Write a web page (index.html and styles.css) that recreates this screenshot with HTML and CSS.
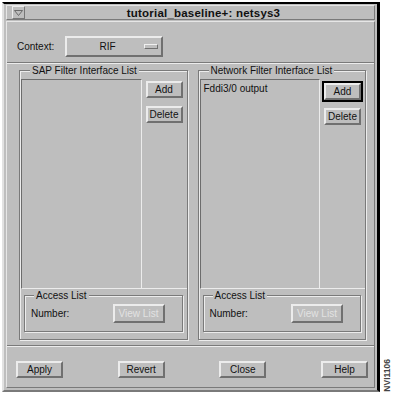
FILE: index.html
```html
<!DOCTYPE html>
<html lang="en">
<head>
  <meta charset="UTF-8" />
  <title>tutorial_baseline+: netsys3</title>
  <link rel="stylesheet" href="styles.css">
</head>
<body>

  <div class="screen">
    <div class="window">
      <!-- Title Bar -->
      <div class="titlebar">
        <span class="menu-btn">
          <svg width="9" height="6" viewBox="0 0 9 6"><path d="M0.5 0.5 H8.5 L4.5 5.5 Z" fill="none" stroke="#6a6a6a" stroke-width="1"/></svg>
        </span>
        <span class="title">tutorial_baseline+: netsys3</span>
      </div>

      <div class="content">
        <!-- Context -->
        <div class="context-row">
          <span class="label">Context:</span>
          <div class="option">
            <span class="option-text">RIF</span>
            <span class="indicator"></span>
          </div>
        </div>

        <div class="sep"></div>

        <!-- Filter Lists -->
        <div class="groups">
          <div class="group">
            <span class="group-title">SAP Filter Interface List</span>
            <div class="pane">
              <div class="list"></div>
              <div class="side">
                <button class="btn">Add</button>
                <button class="btn">Delete</button>
              </div>
            </div>
            <div class="access">
              <span class="group-title">Access List</span>
              <div class="access-row">
                <span>Number:</span>
                <button class="btn disabled">View List</button>
              </div>
            </div>
          </div>

          <div class="group">
            <span class="group-title">Network Filter Interface List</span>
            <div class="pane">
              <div class="list">
                <div class="list-item">Fddi3/0 output</div>
              </div>
              <div class="side">
                <div class="default"><button class="btn">Add</button></div>
                <button class="btn">Delete</button>
              </div>
            </div>
            <div class="access">
              <span class="group-title">Access List</span>
              <div class="access-row">
                <span>Number:</span>
                <button class="btn disabled">View List</button>
              </div>
            </div>
          </div>
        </div>

        <div class="sep"></div>

        <!-- Action Buttons -->
        <div class="actions">
          <button class="btn">Apply</button>
          <button class="btn">Revert</button>
          <button class="btn">Close</button>
          <button class="btn">Help</button>
        </div>
      </div>
    </div>

    <div class="caption">NVI1106</div>
  </div>

</body>
</html>
```

FILE: styles.css
```css
/* Reset & Base */
* { margin:0; padding:0; box-sizing:border-box; }
body {
  background:#fff;
  font-family:'Liberation Sans',Arial,sans-serif;
  font-size:10px;
  color:#111;
}

.screen {
  display:flex; align-items:flex-end;
  width:394px; height:395px;
}

/* Window Frame */
.window {
  display:flex; flex-direction:column;
  width:378px; height:390px;
  margin:2px 0 0 2px;
  background:#bebebe;
  border-top:2px solid #000;
  border-right:3px solid #000;
  border-left:2px solid #e2e2e2;
  border-bottom:2px solid #7a7a7a;
  padding:1px 2px 2px 2px;
  align-self:flex-start;
}

.titlebar {
  display:flex; align-items:center;
  height:17px;
  border:1px solid;
  border-color:#e6e6e6 #7a7a7a #7a7a7a #e6e6e6;
}
.menu-btn {
  display:flex; align-items:center; justify-content:center;
  width:13px; height:13px;
  margin-left:5px;
  border:1px solid;
  border-color:#ececec #777 #777 #ececec;
}
.title {
  flex:1;
  text-align:center;
  font-weight:bold;
  font-size:11.5px;
  letter-spacing:0.2px;
  padding-left:8px;
}

/* Content */
.content {
  flex:1;
  display:flex; flex-direction:column;
  border:1px solid;
  border-color:#e6e6e6 #7a7a7a #7a7a7a #e6e6e6;
  margin-top:1px;
}

.context-row {
  display:flex; align-items:center;
  margin:14px 0 0 10px;
  height:21px;
}
.label { width:48px; }
.option {
  display:flex; align-items:center;
  width:98px; height:21px;
  border:2px solid;
  border-color:#ececec #707070 #707070 #ececec;
}
.option-text { flex:1; text-align:center; padding-left:4px; }
.indicator {
  width:14px; height:5px;
  margin-right:3px;
  border:1px solid;
  border-color:#f0f0f0 #707070 #707070 #f0f0f0;
}

.sep {
  height:2px;
  border-top:1px solid #7a7a7a;
  border-bottom:1px solid #ececec;
  margin-top:5px;
}

/* Groups */
.groups {
  flex:1;
  display:flex; gap:10px;
  padding:6px 8px 0 12px;
}
.group {
  flex:1;
  display:flex; flex-direction:column;
  height:270px;
  border:1px solid #7a7a7a;
  box-shadow:1px 1px 0 #ececec, inset 1px 1px 0 #ececec;
  padding:0 0 7px 1px;
}
.group-title {
  align-self:flex-start;
  margin:-6px 0 0 9px;
  padding:0 2px;
  background:#bebebe;
  line-height:11px;
}
.pane {
  flex:1;
  display:flex;
  margin-top:3px;
}
.list {
  flex:1;
  border-top:1px solid #6c6c6c;
  border-left:1px solid #6c6c6c;
  border-right:1px solid #ececec;
  border-bottom:1px solid #ececec;
  padding:3px 3px;
}
.list-item { line-height:12px; }
.side {
  width:45px;
  display:flex; flex-direction:column; align-items:center;
  gap:8px;
  padding-top:2px;
  border-bottom:1px solid #ececec;
}
.default {
  border:2px solid #000;
  margin-bottom:-2px;
}

/* Buttons */
.btn {
  width:37px; height:17px;
  font-family:'Liberation Sans',Arial,sans-serif;
  font-size:10px;
  color:#111;
  background:#bebebe;
  border:2px solid;
  border-color:#ececec #707070 #707070 #ececec;
}
.btn.disabled { color:#e2e2e2; width:52px; height:19px; }

/* Access List */
.access {
  display:flex; flex-direction:column;
  height:37px;
  margin:6px 4px 0 3px;
  border:1px solid #7a7a7a;
  box-shadow:1px 1px 0 #ececec, inset 1px 1px 0 #ececec;
}
.access-row {
  display:flex; align-items:center; justify-content:space-between;
  padding:3px 17px 0 6px;
}

/* Actions */
.actions {
  display:flex; justify-content:space-between;
  padding:14px 6px 0 9px;
  height:40px;
}
.actions .btn { width:47px; }

.caption {
  writing-mode:vertical-rl;
  transform:rotate(180deg);
  font-size:8.5px;
  font-weight:bold;
  margin:0 0 3px 2px;
  color:#444;
}
```
